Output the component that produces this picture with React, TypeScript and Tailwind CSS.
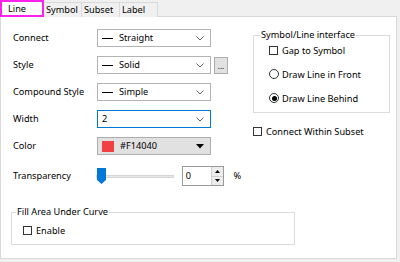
import React from 'react';

const Chevron = () => (
  <svg width="8" height="5" viewBox="0 0 8 5" className="shrink-0">
    <path d="M0.5 0.5 L4 4 L7.5 0.5" fill="none" stroke="#606060" strokeWidth="1" />
  </svg>
);

const Dropdown = ({ text, dash = true, focused = false }: { text: string; dash?: boolean; focused?: boolean }) => (
  <div
    className={`w-[114px] h-[18px] flex items-center bg-white border pl-[4px] pr-[6px] ${
      focused ? 'border-[#0078d7]' : 'border-[#b4b4b4]'
    }`}
  >
    {dash && <span className="w-[11px] h-px bg-black mr-[6px] shrink-0" />}
    <span className="flex-1 leading-none">{text}</span>
    <Chevron />
  </div>
);

const CheckBox = ({ label }: { label: string }) => (
  <div className="flex items-center gap-[4px]">
    <span className="w-[9px] h-[9px] border border-[#333] bg-white shrink-0" />
    <span className="leading-none">{label}</span>
  </div>
);

const Radio = ({ label, checked = false }: { label: string; checked?: boolean }) => (
  <div className="flex items-center gap-[3px]">
    <span className="w-[10px] h-[10px] rounded-full border border-[#333] bg-white flex items-center justify-center shrink-0">
      {checked && <span className="w-[5px] h-[5px] rounded-full bg-black" />}
    </span>
    <span className="leading-none">{label}</span>
  </div>
);

const Row = ({ label, children }: { label: string; children: React.ReactNode }) => (
  <div className="flex items-center h-[18px]">
    <span className="w-[84px] leading-none">{label}</span>
    {children}
  </div>
);

export default function App() {
  return (
    <div className="w-[400px] h-[262px] bg-[#f0f0f0] font-['Noto_Sans',sans-serif] text-[9.2px] text-black overflow-hidden">
      {/* Tabs */}
      <div className="flex items-end h-[17px] relative z-10">
        <div className="w-[44px] h-[17px] bg-white border-2 border-[#ff22ee] flex items-center pl-[6px] leading-none">
          Line
        </div>
        {['Symbol', 'Subset', 'Label'].map((t) => (
          <div
            key={t}
            className="w-[38px] h-[15px] border border-[#d9d9d9] border-l-0 border-b-0 bg-[#f0f0f0] flex items-center pl-[2px] leading-none"
          >
            {t}
          </div>
        ))}
      </div>

      {/* Panel */}
      <div className="w-[397px] h-[243px] -mt-px bg-white border border-[#d9d9d9] pt-[12px]">
        <div className="flex">
          {/* Left column */}
          <div className="pl-[12px] w-[240px] flex flex-col gap-[9px]">
            <Row label="Connect">
              <Dropdown text="Straight" />
            </Row>
            <Row label="Style">
              <Dropdown text="Solid" />
              <div className="ml-[3px] w-[14px] h-[17px] bg-[#e1e1e1] border border-[#adadad] flex items-end justify-center pb-[3px] text-[8px] leading-none">
                ...
              </div>
            </Row>
            <Row label="Compound Style">
              <Dropdown text="Simple" />
            </Row>
            <Row label="Width">
              <Dropdown text="2" dash={false} focused />
            </Row>
            <Row label="Color">
              <div className="w-[114px] h-[18px] flex items-center bg-[#e1e1e1] border border-[#adadad] pl-[4px] pr-[6px]">
                <span className="w-[12px] h-[11px] bg-[#f14040] mr-[6px] shrink-0" />
                <span className="flex-1 leading-none">#F14040</span>
                <svg width="8" height="5" viewBox="0 0 8 5">
                  <path d="M0 0 L8 0 L4 4.5 Z" fill="#000" />
                </svg>
              </div>
            </Row>
            <div className="flex items-center h-[20px] mt-[2px]">
              <span className="w-[84px] leading-none">Transparency</span>
              <div className="relative w-[78px] h-[16px] flex items-center">
                <div className="w-full h-[3px] bg-[#e7e7e7] border border-[#d6d6d6]" />
                <svg width="9" height="16" viewBox="0 0 9 16" className="absolute left-[1px] top-0">
                  <path d="M0 0 H9 V12 L4.5 16 L0 12 Z" fill="#0078d7" />
                </svg>
              </div>
              <div className="ml-[8px] w-[43px] h-[20px] bg-white border border-[#9a9a9a] flex">
                <span className="flex-1 pl-[3px] flex items-center leading-none">0</span>
                <div className="w-[12px] flex flex-col border-l border-[#d0d0d0]">
                  <div className="flex-1 bg-[#ececec] flex items-center justify-center border-b border-[#d0d0d0]">
                    <svg width="5" height="3" viewBox="0 0 5 3">
                      <path d="M0 3 L2.5 0 L5 3 Z" fill="#000" />
                    </svg>
                  </div>
                  <div className="flex-1 bg-[#ececec] flex items-center justify-center">
                    <svg width="5" height="3" viewBox="0 0 5 3">
                      <path d="M0 0 L5 0 L2.5 3 Z" fill="#000" />
                    </svg>
                  </div>
                </div>
              </div>
              <span className="ml-[9px] leading-none">%</span>
            </div>
          </div>

          {/* Right column */}
          <div className="ml-[12px] flex flex-col">
            <fieldset className="w-[137px] h-[84px] border border-[#dcdcdc]">
              <legend className="ml-[6px] px-[1px] leading-[12px]">Symbol/Line interface</legend>
              <div className="pl-[15px] pt-[5px] flex flex-col gap-[14px]">
                <CheckBox label="Gap to Symbol" />
                <Radio label="Draw Line in Front" />
                <Radio label="Draw Line Behind" checked />
              </div>
            </fieldset>
            <div className="mt-[14px]">
              <CheckBox label="Connect Within Subset" />
            </div>
          </div>
        </div>

        {/* Fill area group */}
        <fieldset className="ml-[10px] mt-[19px] w-[284px] h-[40px] border border-[#dcdcdc]">
          <legend className="ml-[4px] px-[1px] leading-[14px]">Fill Area Under Curve</legend>
          <div className="pl-[11px] pt-[7px]">
            <CheckBox label="Enable" />
          </div>
        </fieldset>
      </div>
    </div>
  );
}
